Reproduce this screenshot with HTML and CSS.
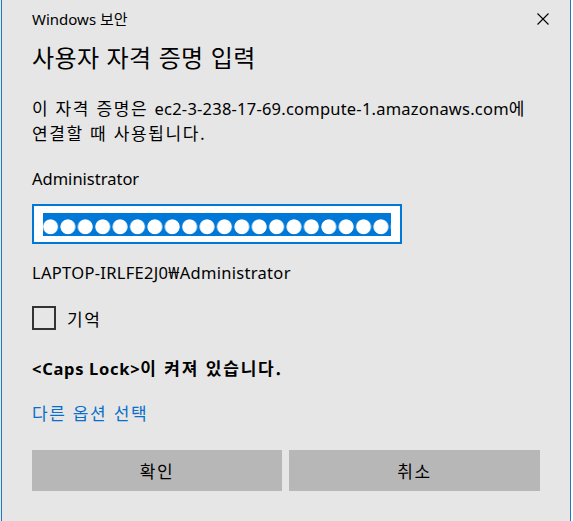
FILE: index.html
```html
<!DOCTYPE html>
<html lang="ko">
<head>
<meta charset="utf-8">
<title>Windows 보안</title>
<link rel="stylesheet" href="styles.css">
</head>
<body>
<div class="dialog">
  <div class="header">
    <span class="app">Windows <span class="ko-s">보안</span></span>
    <span class="close" aria-label="닫기">
      <svg width="12" height="12" viewBox="0 0 12 12"><path d="M0.5 0.5 L11.5 11.5 M11.5 0.5 L0.5 11.5" stroke="#000" stroke-width="1.1" fill="none"/></svg>
    </span>
  </div>
  <h1 class="title">사용자 자격 증명 입력</h1>
  <p class="desc"><span class="ko">이 자격 증명은 </span><span class="host">ec2-3-238-17-69.compute-1.amazonaws.com</span><span class="ko">에</span><br><span class="ko">연결할 때 사용됩니다.</span></p>
  <div class="user">Administrator</div>
  <div class="field"><div class="sel"></div></div>
  <div class="domain">LAPTOP-IRLFE2J0₩Administrator</div>
  <label class="remember"><span class="box"></span><span class="ko">기억</span></label>
  <div class="caps"><span class="caps-key">&lt;Caps Lock&gt;</span><span class="ko">이 켜져 있습니다.</span></div>
  <div class="more ko">다른 옵션 선택</div>
  <div class="buttons">
    <div class="btn ko">확인</div>
    <div class="btn ko">취소</div>
  </div>
</div>
</body>
</html>
```
FILE: styles.css
```css
html, body {
  margin: 0;
  padding: 0;
  background: #ffffff;
}
body {
  font-family: "Noto Sans", "Noto Sans CJK KR", sans-serif;
  font-size: 16.5px;
  color: #000;
}
.dialog {
  box-sizing: border-box;
  width: 570px;
  height: 521px;
  margin-left: 1px;
  background: #e6e6e6;
  border-left: 1px solid #1979ca;
  border-right: 1px solid #1979ca;
  box-shadow: -1px 0 0 #e6e6e6;
  padding: 9px 29px 0 30px;
}
.ko {
  font-family: "Noto Sans CJK KR", sans-serif;
  font-size: 17px;
  letter-spacing: 1.6px;
}
.ko-s {
  font-family: "Noto Sans CJK KR", sans-serif;
}
.header {
  display: flex;
  justify-content: space-between;
  align-items: center;
  height: 20px;
  line-height: 20px;
}
.app {
  font-size: 15px;
}
.close {
  display: flex;
  margin-right: -8px;
}
.title {
  margin: 13px 0 0;
  font-family: "Noto Sans CJK KR", sans-serif;
  font-weight: 400;
  font-size: 24px;
  letter-spacing: 0.4px;
  line-height: 30px;
}
.desc {
  margin: 24px 0 0;
  line-height: 24px;
  white-space: nowrap;
}
.host {
  letter-spacing: 0.22px;
}
.user {
  margin-top: 21px;
  line-height: 24px;
}
.field {
  box-sizing: border-box;
  width: 370px;
  height: 40px;
  margin-top: 13px;
  background: #fff;
  border: 2px solid #0078d7;
  padding: 7px 0 0 9px;
}
.sel {
  width: 348px;
  height: 23px;
  background-color: #0078d7;
  background-image: radial-gradient(circle 7.5px at 8.7px 60%, #fff 7px, rgba(255,255,255,0) 7.8px);
  background-size: 17.4px 100%;
  background-position: -1.2px 0;
  background-repeat: repeat-x;
}
.domain {
  margin-top: 17px;
  line-height: 24px;
  letter-spacing: 0.3px;
}
.remember {
  display: flex;
  align-items: center;
  gap: 11px;
  margin-top: 21px;
  height: 24px;
}
.box {
  box-sizing: border-box;
  width: 24px;
  height: 24px;
  border: 2px solid #333;
}
.caps {
  margin-top: 26px;
  line-height: 24px;
  font-weight: 700;
}
.caps-key {
  letter-spacing: 0.7px;
}
.caps .ko {
  font-weight: 700;
  letter-spacing: 1.8px;
}
.more {
  margin-top: 20px;
  line-height: 24px;
  color: #0b6fc9;
}
.buttons {
  display: grid;
  grid-template-columns: 250px 251px;
  gap: 7px;
  margin-top: 25px;
}
.btn {
  height: 41px;
  line-height: 41px;
  text-align: center;
  background: #b7b7b7;
}
```
